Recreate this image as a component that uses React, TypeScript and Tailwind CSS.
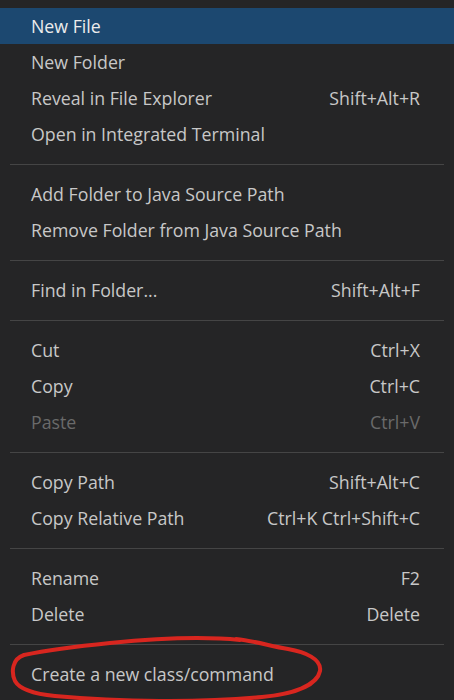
import React from 'react';

type Item = { label: string; keys?: string; disabled?: boolean; active?: boolean } | 'sep';

const ITEMS: Item[] = [
  { label: 'New File', active: true },
  { label: 'New Folder' },
  { label: 'Reveal in File Explorer', keys: 'Shift+Alt+R' },
  { label: 'Open in Integrated Terminal' },
  'sep',
  { label: 'Add Folder to Java Source Path' },
  { label: 'Remove Folder from Java Source Path' },
  'sep',
  { label: 'Find in Folder...', keys: 'Shift+Alt+F' },
  'sep',
  { label: 'Cut', keys: 'Ctrl+X' },
  { label: 'Copy', keys: 'Ctrl+C' },
  { label: 'Paste', keys: 'Ctrl+V', disabled: true },
  'sep',
  { label: 'Copy Path', keys: 'Shift+Alt+C' },
  { label: 'Copy Relative Path', keys: 'Ctrl+K Ctrl+Shift+C' },
  'sep',
  { label: 'Rename', keys: 'F2' },
  { label: 'Delete', keys: 'Delete' },
  'sep',
  { label: 'Create a new class/command' },
];

// hand-drawn red circle around the last entry
const Scribble = () => (
  <svg className="absolute inset-0 pointer-events-none" width="454" height="700" viewBox="0 0 454 700">
    <path
      d="M 240 640 C 200 636, 150 639, 110 643 C 80 646, 48 650, 24 655 C 12 659, 11 672, 15 681 C 20 690, 35 694, 55 696 C 120 702, 200 703, 262 697 C 292 694, 317 686, 320 671 C 322 659, 305 652, 288 649 C 270 646, 255 641, 236 639"
      fill="none"
      stroke="#d8261f"
      strokeWidth="4"
      strokeLinecap="round"
    />
  </svg>
);

export default function App() {
  return (
    <div
      className="relative w-[454px] min-h-[700px] bg-[#252526] pt-[8px] overflow-hidden"
      style={{ fontFamily: '"Open Sans", "Noto Sans", sans-serif' }}
    >
      {ITEMS.map((it, i) =>
        it === 'sep' ? (
          <div key={i} className="h-6 flex items-center px-[10px]">
            <div className="h-px w-full bg-[#454545]" />
          </div>
        ) : (
          <div
            key={i}
            className={
              'h-9 flex items-center justify-between pl-[31px] pr-[34px] text-[17.75px] ' +
              (it.active
                ? 'bg-[#1c4870] text-[#ececec]'
                : it.disabled
                ? 'text-[#6a6a6a]'
                : 'text-[#c8c8c8]')
            }
          >
            <span>{it.label}</span>
            {it.keys && <span>{it.keys}</span>}
          </div>
        )
      )}
      <Scribble />
    </div>
  );
}
